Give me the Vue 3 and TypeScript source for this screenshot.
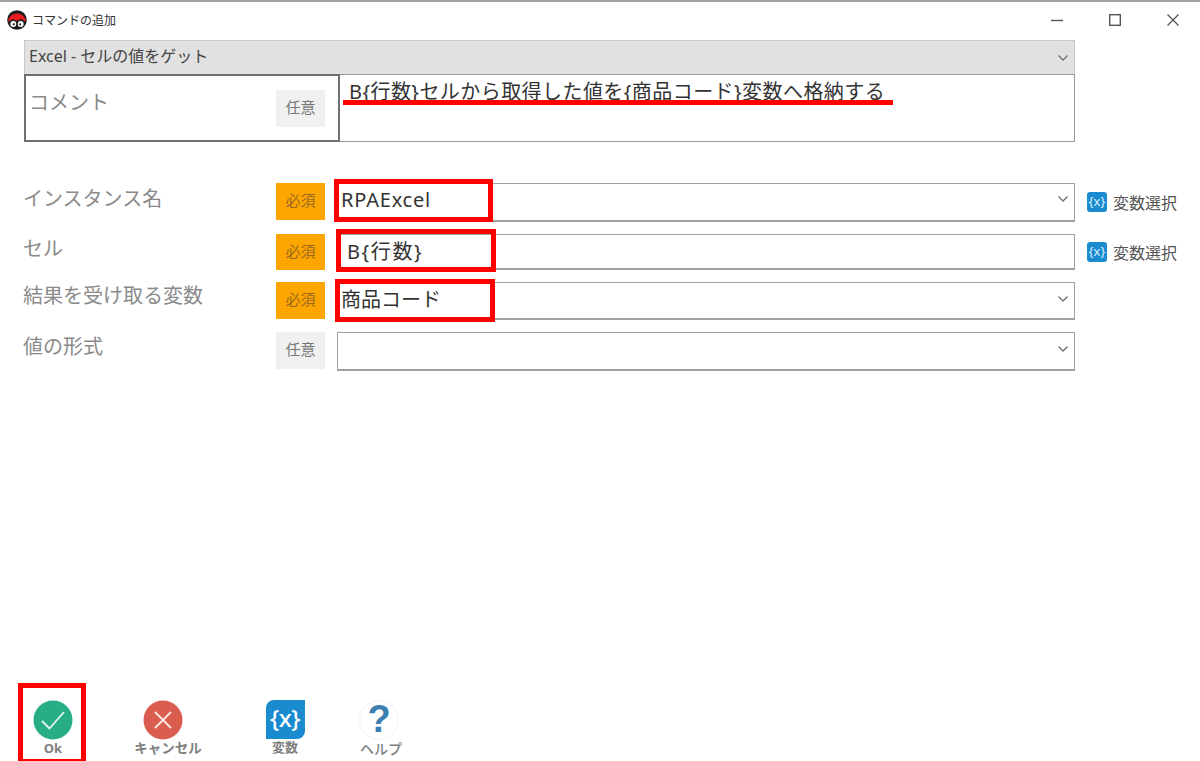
<script setup lang="ts">
interface Row {
  label: string
  required: boolean
  value: string
  select: boolean
  variable: boolean
  height: number
  rowClass: string
}
const rows: Row[] = [
  { label: 'インスタンス名', required: true, value: 'RPAExcel', select: true, variable: true, height: 39, rowClass: 'r1' },
  { label: 'セル', required: true, value: 'B{行数}', select: false, variable: true, height: 36, rowClass: 'r2' },
  { label: '結果を受け取る変数', required: true, value: '商品コード', select: true, variable: false, height: 38, rowClass: 'r3' },
  { label: '値の形式', required: false, value: '', select: true, variable: false, height: 39, rowClass: 'r4' },
]
</script>

<template>
  <div class="window">
    <header class="titlebar">
      <svg class="logo" viewBox="0 0 20 20" width="20" height="20">
        <circle cx="10" cy="10" r="9.800" fill="#1c1c1c" />
        <path d="M.8 11.500a9.300 9.300 0 0 1 18.400 0c-1.500 0-2.500-1-3-1.500-1.500-1-3.500-1-4.500.5h-3.400c-1-1.500-3-1.500-4.500-.5-.5.5-1.500 1.500-3 1.500z" fill="#ea1c1f" />
        <ellipse cx="6.300" cy="14" rx="2.900" ry="3" fill="#fff" />
        <ellipse cx="13.700" cy="14" rx="2.900" ry="3" fill="#fff" />
        <circle cx="6.800" cy="14.300" r="1.100" fill="#222" />
        <circle cx="13.200" cy="14.300" r="1.100" fill="#222" />
      </svg>
      <span class="title">コマンドの追加</span>
      <div class="controls">
        <svg width="14" height="14" viewBox="0 0 14 14"><path d="M1 7.500h12" stroke="#555" stroke-width="1.400" /></svg>
        <svg width="14" height="14" viewBox="0 0 14 14"><rect x="1.700" y="1.700" width="10.600" height="10.600" fill="none" stroke="#555" stroke-width="1.400" /></svg>
        <svg width="14" height="14" viewBox="0 0 14 14"><path d="M1.500 1.500l11 11M12.500 1.500l-11 11" stroke="#555" stroke-width="1.300" /></svg>
      </div>
    </header>

    <div class="command">
      <span class="command-text">Excel - セルの値をゲット</span>
      <svg class="chev" viewBox="0 0 12 8" width="12" height="8"><path d="M1.500 1.500L6 6l4.500-4.500" fill="none" stroke="#707070" stroke-width="1.300" /></svg>
    </div>

    <div class="comment">
      <div class="comment-label">
        <span class="label-text">コメント</span>
        <span class="badge optional">任意</span>
      </div>
      <div class="comment-input">
        <span>B{行数}セルから取得した値を{商品コード}変数へ格納する</span>
        <i class="underline"></i>
      </div>
    </div>

    <section class="form">
      <div v-for="row in rows" :key="row.label" class="row" :class="row.rowClass">
        <span class="row-label">{{ row.label }}</span>
        <span class="badge" :class="row.required ? 'required' : 'optional'">{{ row.required ? '必須' : '任意' }}</span>
        <div class="input" :style="{ height: row.height + 'px' }">
          <span class="value">{{ row.value }}</span>
          <svg v-if="row.select" class="chev" viewBox="0 0 12 8" width="12" height="8"><path d="M1.500 1.500L6 6l4.500-4.500" fill="none" stroke="#707070" stroke-width="1.300" /></svg>
          <i v-if="row.value" class="mark"></i>
        </div>
        <div v-if="row.variable" class="varpick">
          <span class="varicon">{x}</span>
          <span>変数選択</span>
        </div>
      </div>
    </section>

    <footer class="actions">
      <button class="action ok">
        <svg width="40" height="40" viewBox="0 0 40 40">
          <circle cx="20" cy="20" r="19.500" fill="#27ae87" />
          <path d="M9 21l7.500 7.500L31 12" fill="none" stroke="#e8f7f1" stroke-width="1.800" />
        </svg>
        <span>Ok</span>
        <i class="okmark"></i>
      </button>
      <button class="action cancel">
        <svg width="40" height="40" viewBox="0 0 40 40">
          <circle cx="20" cy="20" r="19.500" fill="#da5d50" />
          <path d="M12 12l16 16M28 12L12 28" fill="none" stroke="#fbe9e6" stroke-width="1.800" />
        </svg>
        <span class="shifted">キャンセル</span>
      </button>
      <button class="action vars">
        <span class="bigvar">{x}</span>
        <span>変数</span>
      </button>
      <button class="action help">
        <span class="helpicon">?</span>
        <span class="shifted">ヘルプ</span>
      </button>
    </footer>
  </div>
</template>

<style>
html, body { margin: 0; background: #fff; }
</style>

<style scoped>
.window {
  width: 1200px;
  height: 761px;
  box-sizing: border-box;
  border-top: 2px solid #a0a0a0;
  background: #fff;
  position: relative;
  overflow: hidden;
  display: flex;
  flex-direction: column;
  font-family: "Noto Sans", "Noto Sans CJK JP", sans-serif;
  color: #333;
}
.titlebar {
  height: 38px;
  flex: none;
  display: flex;
  align-items: center;
  padding: 0 0 2px 7px;
  box-sizing: border-box;
}
.logo { flex: none; }
.title { margin-left: 5px; font-size: 12px; color: #333; }
.controls {
  margin-left: auto;
  display: flex;
  gap: 44px;
  padding-right: 20px;
}
.command {
  margin-left: 24px;
  width: 1051px;
  height: 35px;
  flex: none;
  box-sizing: border-box;
  background: #e1e1e1;
  border: 1px solid #c8c8c8;
  display: flex;
  align-items: center;
  justify-content: space-between;
  padding: 0 5px 0 4px;
  font-size: 16px;
  color: #444;
}
.command-text { margin-bottom: 6px; }
.chev { flex: none; }
.comment {
  margin-left: 24px;
  width: 1051px;
  height: 68px;
  flex: none;
  margin-top: -1px;
  display: flex;
}
.comment-label {
  width: 316px;
  flex: none;
  box-sizing: border-box;
  border: 2px solid #707070;
  display: flex;
  align-items: flex-start;
  justify-content: space-between;
  padding: 12px 13px 0 3px;
}
.label-text { font-size: 20px; color: #8a8a8a; line-height: 26px; margin-top: 2px; }
.comment-label .badge { margin-top: 2px; }
.comment-input {
  flex: 1;
  box-sizing: border-box;
  border: 1px solid #9a9a9a;
  border-left: none;
  position: relative;
  padding: 4px 0 0 9px;
  font-size: 20px;
  letter-spacing: 0.44px;
  line-height: 26px;
  color: #333;
}
.underline {
  position: absolute;
  left: 3px;
  top: 25px;
  width: 550px;
  height: 5px;
  background: #f00;
}
.badge {
  width: 49px;
  height: 37px;
  flex: none;
  display: flex;
  align-items: center;
  justify-content: center;
  font-size: 15px;
  padding-bottom: 4px;
  box-sizing: border-box;
}
.optional { background: #f0f0f0; color: #777; }
.required { background: #ffa500; color: #9a6a20; }
.form {
  margin-left: 24px;
  margin-top: 41px;
  width: 1160px;
  display: flex;
  flex-direction: column;
}
.row {
  display: flex;
  align-items: flex-start;
  position: relative;
}
.r1 { height: 51px; }
.r2 { height: 48px; }
.r3 { height: 50px; }
.row-label {
  width: 252px;
  flex: none;
  font-size: 20px;
  line-height: 26px;
  color: #8a8a8a;
  margin-top: 2px;
  margin-left: -1px;
  margin-right: 1px;
}
.r1 .row-label { margin-top: 3px; }
.r3 .row-label { margin-top: 1px; }
.r2 .badge { height: 36px; }
.input {
  margin-left: 12px;
  width: 738px;
  flex: none;
  box-sizing: border-box;
  border: 1px solid #a0a0a0;
  border-bottom-width: 2px;
  display: flex;
  align-items: center;
  justify-content: space-between;
  padding: 0 5px 4px 3px;
  position: relative;
  font-size: 20px;
  color: #333;
}
.r1 .input { padding-bottom: 6px; }
.r1 .value { letter-spacing: 0.8px; }
.r2 .input { padding-bottom: 2px; }
.r2 .value { margin-left: 6px; letter-spacing: 1.6px; }
.mark {
  position: absolute;
  border: 5px solid #f00;
  box-sizing: border-box;
  left: -4px;
  top: -5px;
  width: 159px;
  height: 43px;
}
.r2 .mark { left: -2px; top: -6px; width: 160px; height: 43px; }
.r3 .mark { left: -3px; top: -4px; width: 160px; height: 43px; }
.varpick {
  margin-left: 12px;
  margin-top: 7px;
  display: flex;
  align-items: center;
  gap: 6px;
  font-size: 16px;
  color: #555;
  white-space: nowrap;
}
.r2 .varpick { margin-top: 6px; }
.varicon {
  width: 20px;
  height: 20px;
  background: #1b8bd0;
  border-radius: 3px;
  color: #d8eefa;
  font-size: 13px;
  line-height: 18px;
  text-align: center;
}
.actions {
  position: absolute;
  left: 0;
  right: 0;
  top: 698px;
  display: flex;
  align-items: flex-start;
}
.action {
  all: unset;
  display: flex;
  flex-direction: column;
  align-items: center;
  font-size: 13px;
  font-weight: 700;
  color: #7f7f7f;
  position: relative;
  line-height: 17px;
  box-sizing: border-box;
  white-space: nowrap;
}
.ok { margin-left: 33px; width: 40px; }
.cancel { margin-left: 70px; width: 40px; }
.shifted { transform: translateX(5px); }
.cancel .shifted { font-size: 13.5px; }
.vars { margin-left: 82px; width: 40px; }
.help { margin-left: 54px; width: 40px; }
.help .shifted { transform: translateX(2px); font-size: 14px; font-weight: 500; }
.okmark {
  position: absolute;
  left: -15px;
  top: -17px;
  width: 68px;
  height: 80px;
  box-sizing: border-box;
  border: 5px solid #f00;
  border-bottom-width: 4px;
}
.bigvar {
  width: 39px;
  height: 39px;
  box-sizing: border-box;
  background: #1b8bd0;
  border-radius: 8px 0 8px 0;
  color: #fff;
  font-size: 24px;
  font-weight: 500;
  line-height: 36px;
  text-align: center;
  letter-spacing: -0.5px;
}
.helpicon {
  width: 40px;
  height: 40px;
  box-sizing: border-box;
  border: 1px solid #f2f2f2;
  border-radius: 50%;
  color: #3c7fb0;
  font-size: 38px;
  font-weight: 700;
  line-height: 37px;
  text-align: center;
  font-family: "Liberation Sans", sans-serif;
}
</style>
